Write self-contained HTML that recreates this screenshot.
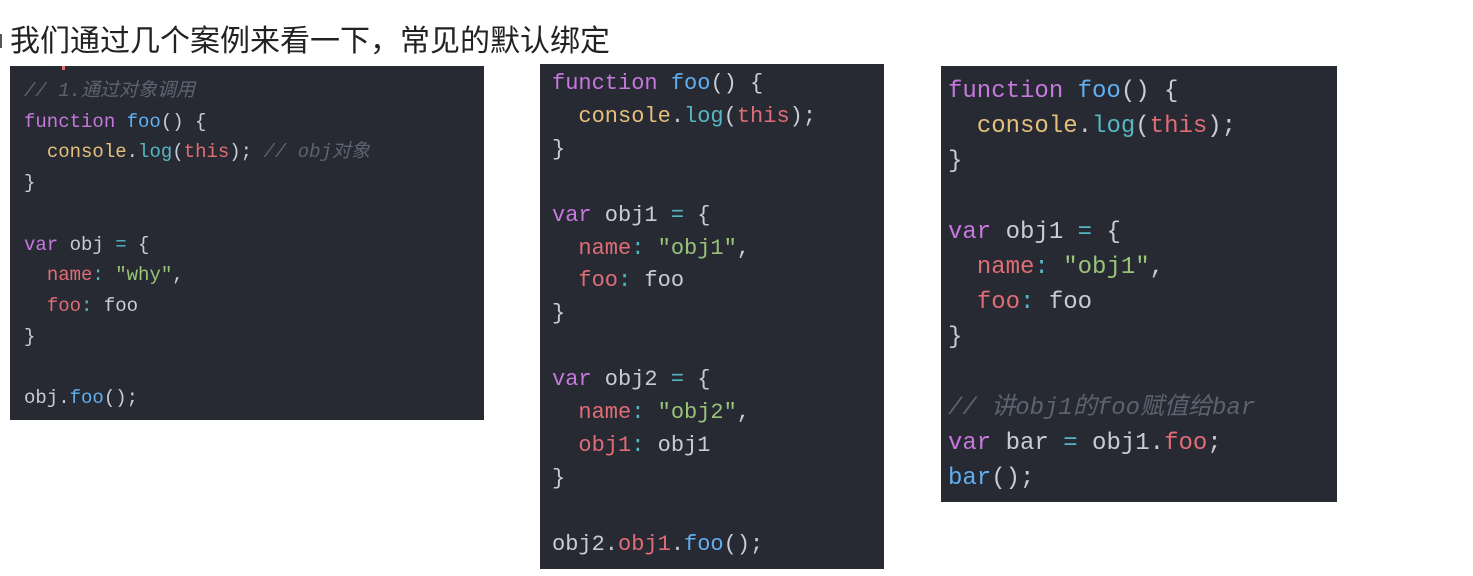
<!DOCTYPE html>
<html><head><meta charset="utf-8"><style>
body{margin:0;width:1473px;height:576px;background:#fff;position:relative;overflow:hidden;font-family:"Liberation Sans","Noto Sans CJK SC",sans-serif}
.t{position:absolute;left:10px;top:22px;font-size:30px;line-height:40px;color:#222;white-space:nowrap}
.dot{position:absolute;left:-3px;top:34px;width:5px;height:14px;background:#555}
.p{position:absolute;background:#272a33}
pre{margin:0;position:absolute;font-family:"Liberation Mono","Noto Sans CJK SC",monospace;color:#c8ccd4;white-space:pre}
.k{color:#c678dd}.f{color:#61afef}.y{color:#e5c07b}.c{color:#56b6c2}.r{color:#e06c75}.s{color:#98c379}.m{color:#5c6370;font-style:italic}.o{color:#56b6c2}
</style></head><body>
<div class="dot"></div>
<div class="t">我们通过几个案例来看一下，常见的默认绑定</div>
<div class="p" style="left:10px;top:66px;width:474px;height:354px"><div style="position:absolute;left:52px;top:0;width:3px;height:4px;background:#e06c75"></div>
<pre style="left:14px;top:10px;font-size:19px;line-height:30.7px"><span class="m">// 1.通过对象调用</span>
<span class="k">function</span> <span class="f">foo</span>() {
  <span class="y">console</span>.<span class="c">log</span>(<span class="r">this</span>); <span class="m">// obj对象</span>
}

<span class="k">var</span> obj <span class="o">=</span> {
  <span class="r">name</span><span class="o">:</span> <span class="s">"why"</span>,
  <span class="r">foo</span><span class="o">:</span> foo
}

obj.<span class="f">foo</span>();</pre></div>
<div class="p" style="left:540px;top:64px;width:344px;height:505px">
<pre style="left:12px;top:4px;font-size:22px;line-height:32.9px"><span class="k">function</span> <span class="f">foo</span>() {
  <span class="y">console</span>.<span class="c">log</span>(<span class="r">this</span>);
}

<span class="k">var</span> obj1 <span class="o">=</span> {
  <span class="r">name</span><span class="o">:</span> <span class="s">"obj1"</span>,
  <span class="r">foo</span><span class="o">:</span> foo
}

<span class="k">var</span> obj2 <span class="o">=</span> {
  <span class="r">name</span><span class="o">:</span> <span class="s">"obj2"</span>,
  <span class="r">obj1</span><span class="o">:</span> obj1
}

obj2.<span class="r">obj1</span>.<span class="f">foo</span>();</pre></div>
<div class="p" style="left:941px;top:66px;width:396px;height:436px">
<pre style="left:7px;top:8px;font-size:24px;line-height:35.2px"><span class="k">function</span> <span class="f">foo</span>() {
  <span class="y">console</span>.<span class="c">log</span>(<span class="r">this</span>);
}

<span class="k">var</span> obj1 <span class="o">=</span> {
  <span class="r">name</span><span class="o">:</span> <span class="s">"obj1"</span>,
  <span class="r">foo</span><span class="o">:</span> foo
}

<span class="m">// 讲obj1的foo赋值给bar</span>
<span class="k">var</span> bar <span class="o">=</span> obj1.<span class="r">foo</span>;
<span class="f">bar</span>();</pre></div>
</body></html>
